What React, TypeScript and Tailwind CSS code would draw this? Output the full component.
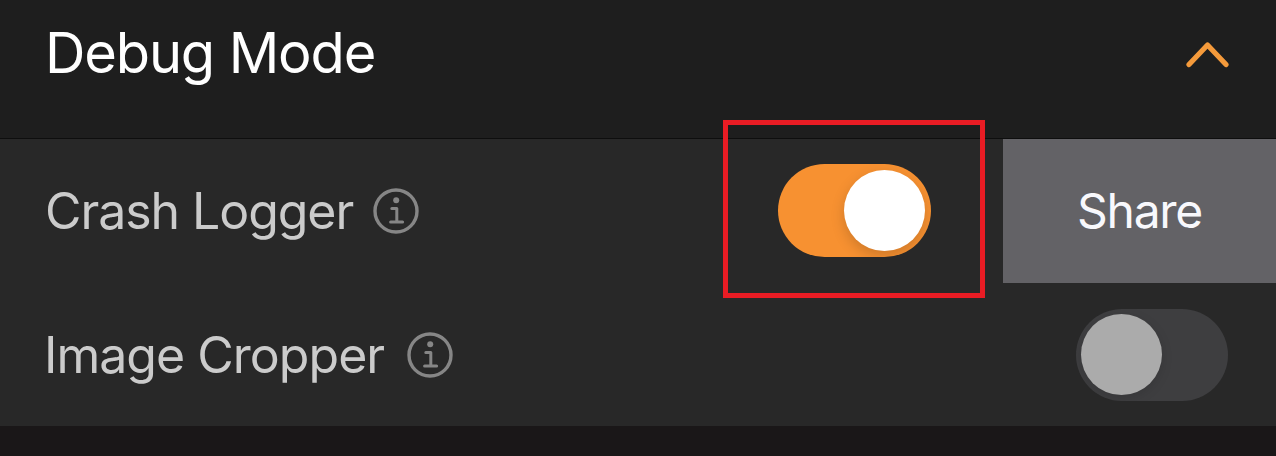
function InfoIcon() {
  return (
    <svg width="46" height="46" viewBox="0 0 46 46" fill="none" stroke="#868686" className="shrink-0">
      <circle cx="23" cy="23" r="21" strokeWidth="3.4" />
      <circle cx="23.2" cy="12.2" r="3" fill="#868686" stroke="none" />
      <path d="M18.8 20.6H23.8V34M17.6 34H29.6" strokeWidth="3" strokeLinecap="round" strokeLinejoin="round" />
    </svg>
  );
}

function Toggle({ on }: { on: boolean }) {
  return (
    <button
      role="switch"
      aria-checked={on}
      className={
        on
          ? "flex h-[93px] w-[153px] shrink-0 items-center justify-end overflow-hidden rounded-full bg-[#f79131] pr-[6px]"
          : "flex h-[92px] w-[152px] shrink-0 items-center justify-start overflow-hidden rounded-full bg-[#3e3e40] pl-[5px]"
      }
    >
      <span
        className={
          on
            ? "size-[81px] rounded-full bg-white shadow-[0_5px_14px_rgba(0,0,0,0.17)]"
            : "size-[81px] rounded-full bg-[#ababab] shadow-[0_3px_12px_rgba(0,0,0,0.12)]"
        }
      />
    </button>
  );
}

export default function App() {
  return (
    <div className="flex h-[456px] w-[1276px] flex-col overflow-hidden bg-[#1a1718] font-['Inter',sans-serif]">
      <header className="flex h-[139px] shrink-0 items-start justify-between border-b border-[#0e0e0e] bg-[#1e1e1e] pr-[47px] pl-[45px]">
        <h1 className="flex h-[105px] items-center text-[56px] leading-none tracking-[-1.15px] whitespace-nowrap text-white">Debug Mode</h1>
        <svg width="43" height="28" viewBox="0 0 43 28" fill="none" className="mt-[41px]">
          <path d="M3 23.5L21.5 4L40 23.5" stroke="#f49a3b" strokeWidth="5.2" strokeLinecap="round" strokeLinejoin="round" />
        </svg>
      </header>
      <section className="relative z-10 flex h-[144px] shrink-0 bg-[#282828]">
        <div className="flex w-[723px] shrink-0 items-center gap-[20px] pl-[45px]">
          <span className="text-[50px] leading-none tracking-[-1.07px] whitespace-nowrap text-[#cbcbcb]">Crash Logger</span>
          <InfoIcon />
        </div>
        <div className="mt-[-19px] mr-[18px] flex h-[178px] w-[262px] shrink-0 items-center border-[5px] border-[#e91c24] pt-[2px] pl-[50px]">
          <Toggle on />
        </div>
        <button className="flex flex-1 items-center justify-center bg-[#636266] text-[48px] leading-none tracking-[-1.3px] text-[#f8f8fc]">Share</button>
      </section>
      <section className="flex h-[143px] shrink-0 items-center justify-between bg-[#282828] pr-[48px] pl-[44px]">
        <div className="flex items-center gap-[23px]">
          <span className="text-[50px] leading-none tracking-[-0.98px] whitespace-nowrap text-[#cbcbcb]">Image Cropper</span>
          <InfoIcon />
        </div>
        <Toggle on={false} />
      </section>
    </div>
  );
}
